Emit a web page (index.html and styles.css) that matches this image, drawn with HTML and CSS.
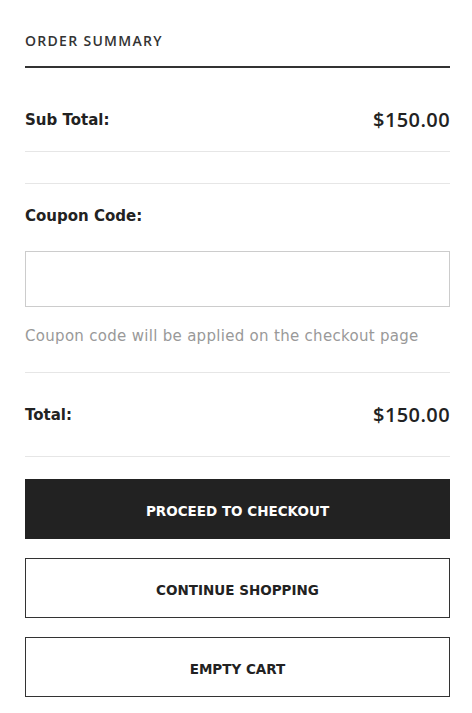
FILE: index.html
```html
<!DOCTYPE html>
<html lang="en">
<head>
    <meta charset="UTF-8">
    <meta name="viewport" content="width=device-width, initial-scale=1.0">
    <title>Order Summary</title>
    <link rel="stylesheet" href="styles.css">
</head>
<body>

<div class="summary">
    <h2 class="summary-title">Order Summary</h2>

    <div class="summary-row subtotal">
        <span class="row-label">Sub Total:</span>
        <span class="row-value">$150.00</span>
    </div>

    <div class="shipping"></div>

    <div class="coupon">
        <label for="coupon" class="row-label">Coupon Code:</label>
        <input type="text" id="coupon" class="coupon-input">
        <p class="coupon-note">Coupon code will be applied on the checkout page</p>
    </div>

    <div class="summary-row total">
        <span class="row-label">Total:</span>
        <span class="row-value">$150.00</span>
    </div>

    <div class="actions">
        <button class="button button-dark">Proceed to checkout</button>
        <button class="button button-outline">Continue shopping</button>
        <button class="button button-outline">Empty cart</button>
    </div>
</div>

</body>
</html>
```

FILE: styles.css
```css
body {
    margin: 0;
    font-family: "DejaVu Sans", Arial, sans-serif;
    background-color: #fff;
    color: #222;
}
.summary {
    padding: 0 22px 0 25px;
}
.summary-title {
    margin: 0;
    padding: 31px 0 15px;
    font-family: "Open Sans", Arial, sans-serif;
    font-size: 14px;
    line-height: 20px;
    font-weight: 600;
    letter-spacing: 1.3px;
    text-transform: uppercase;
    color: #333;
    border-bottom: 2px solid #333;
}
.summary-row {
    display: flex;
    justify-content: space-between;
    align-items: center;
    border-bottom: 1px solid #e6e6e6;
}
.subtotal {
    padding: 40px 0 19px;
}
.total {
    padding: 30px 0 29px;
    border-top: 1px solid #e6e6e6;
}
.row-label {
    font-size: 15px;
    line-height: 24px;
    font-weight: 600;
    color: #222;
}
.total .row-label {
    font-weight: 700;
}
.row-value {
    font-family: "Open Sans", Arial, sans-serif;
    font-size: 20px;
    line-height: 24px;
    font-weight: 600;
    letter-spacing: 0.4px;
    color: #222;
}
.shipping {
    height: 31px;
    border-bottom: 1px solid #e6e6e6;
}
.coupon {
    display: flex;
    flex-direction: column;
    padding: 21px 0 25px;
}
.coupon .row-label {
    line-height: 22px;
}
.coupon-input {
    margin-top: 24px;
    height: 56px;
    box-sizing: border-box;
    border: 1px solid #ccc;
    padding: 0 12px;
    font-size: 15px;
    border-radius: 0;
}
.coupon-note {
    margin: 18px 0 0;
    font-size: 15px;
    line-height: 22px;
    letter-spacing: 0.3px;
    color: #999;
}
.actions {
    display: flex;
    flex-direction: column;
    gap: 19px;
    margin-top: 22px;
}
.button {
    height: 60px;
    padding-top: 4px;
    font-family: inherit;
    font-size: 13.5px;
    font-weight: 700;
    text-transform: uppercase;
    border-radius: 0;
    cursor: pointer;
}
.button-dark {
    background-color: #222;
    color: #fff;
    border: none;
}
.button-outline {
    background-color: #fff;
    color: #222;
    border: 1px solid #333;
}
```
